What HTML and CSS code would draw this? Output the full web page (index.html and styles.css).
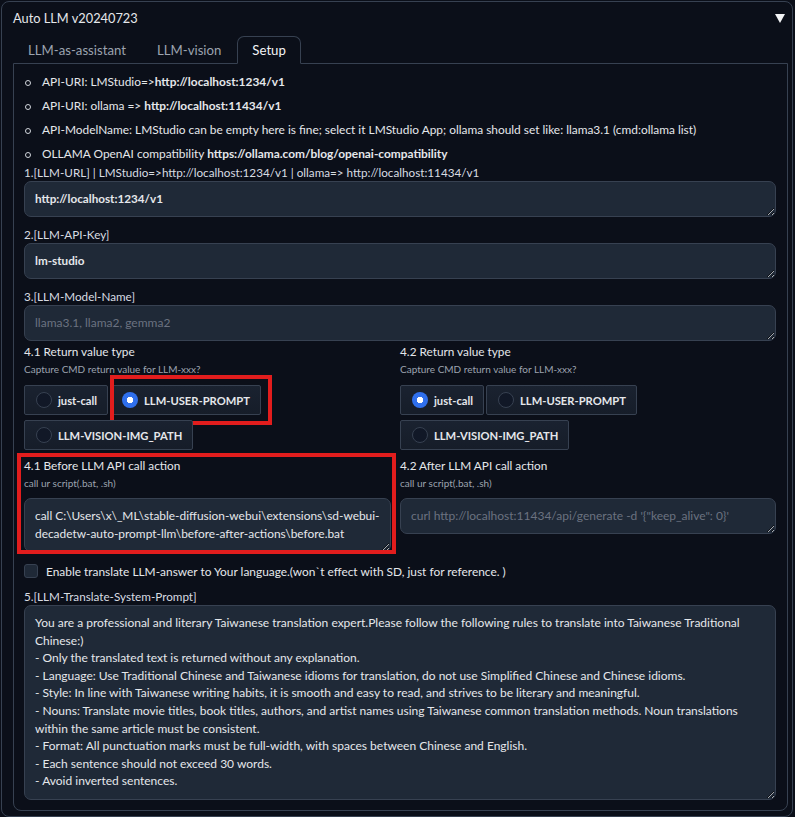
FILE: index.html
```html
<!DOCTYPE html>
<html lang="en">
<head>
<meta charset="utf-8">
<title>Auto LLM</title>
<link rel="stylesheet" href="styles.css">
</head>
<body>
<div class="panel">
  <div class="head">
    <span class="title">Auto LLM v20240723</span>
    <svg class="caret" width="10" height="9" viewBox="0 0 10 9"><polygon points="0,0 10,0 5,9" fill="#f3f4f6"/></svg>
  </div>
  <div class="tabs">
    <button class="tab">LLM-as-assistant</button>
    <button class="tab">LLM-vision</button>
    <button class="tab active">Setup</button>
  </div>
  <div class="tabpanel">
    <ul class="notes">
      <li>API-URI: LMStudio=&gt;<b>http://localhost:1234/v1</b></li>
      <li>API-URI: ollama =&gt; <b>http://localhost:11434/v1</b></li>
      <li>API-ModelName: LMStudio can be empty here is fine; select it LMStudio App; ollama should set like: llama3.1 (cmd:ollama list)</li>
      <li>OLLAMA OpenAI compatibility <b>https://ollama.com/blog/openai-compatibility</b></li>
    </ul>
    <div class="field">
      <label class="lbl">1.[LLM-URL] | LMStudio=&gt;http://localhost:1234/v1 | ollama=&gt; http://localhost:11434/v1</label>
      <textarea class="box strong" rows="1">http://localhost:1234/v1</textarea>
    </div>
    <div class="field">
      <label class="lbl">2.[LLM-API-Key]</label>
      <textarea class="box strong" rows="1">lm-studio</textarea>
    </div>
    <div class="field">
      <label class="lbl">3.[LLM-Model-Name]</label>
      <textarea class="box" rows="1" placeholder="llama3.1, llama2, gemma2"></textarea>
    </div>
    <div class="cols">
      <div class="col">
        <div class="sub">4.1 Return value type</div>
        <div class="info">Capture CMD return value for LLM-xxx?</div>
        <div class="radios">
          <label class="radio"><span class="dot"></span>just-call</label>
          <label class="radio"><span class="dot on"></span>LLM-USER-PROMPT<span class="mark"></span></label>
          <label class="radio"><span class="dot"></span>LLM-VISION-IMG_PATH</label>
        </div>
        <div class="action">
          <div class="sub">4.1 Before LLM API call action</div>
          <div class="info">call ur script(.bat, .sh)</div>
          <textarea class="box two" rows="2">call C:\Users\x\_ML\stable-diffusion-webui\extensions\sd-webui-
decadetw-auto-prompt-llm\before-after-actions\before.bat</textarea>
          <span class="mark2"></span>
        </div>
      </div>
      <div class="col">
        <div class="sub">4.2 Return value type</div>
        <div class="info">Capture CMD return value for LLM-xxx?</div>
        <div class="radios">
          <label class="radio"><span class="dot on"></span>just-call</label>
          <label class="radio"><span class="dot"></span>LLM-USER-PROMPT</label>
          <label class="radio"><span class="dot"></span>LLM-VISION-IMG_PATH</label>
        </div>
        <div class="action">
          <div class="sub">4.2 After LLM API call action</div>
          <div class="info">call ur script(.bat, .sh)</div>
          <textarea class="box" rows="1" placeholder="curl http://localhost:11434/api/generate -d '{&quot;keep_alive&quot;: 0}'"></textarea>
        </div>
      </div>
    </div>
    <label class="check"><span class="cb"></span>Enable translate LLM-answer to Your language.(won`t effect with SD, just for reference. )</label>
    <div class="field last">
      <label class="lbl">5.[LLM-Translate-System-Prompt]</label>
      <textarea class="box big" rows="10">You are a professional and literary Taiwanese translation expert.Please follow the following rules to translate into Taiwanese Traditional
Chinese:)
- Only the translated text is returned without any explanation.
- Language: Use Traditional Chinese and Taiwanese idioms for translation, do not use Simplified Chinese and Chinese idioms.
- Style: In line with Taiwanese writing habits, it is smooth and easy to read, and strives to be literary and meaningful.
- Nouns: Translate movie titles, book titles, authors, and artist names using Taiwanese common translation methods. Noun translations
within the same article must be consistent.
- Format: All punctuation marks must be full-width, with spaces between Chinese and English.
- Each sentence should not exceed 30 words.
- Avoid inverted sentences.</textarea>
    </div>
  </div>
</div>
</body>
</html>
```
FILE: styles.css
```css
* { box-sizing: border-box; }
html, body { margin: 0; padding: 0; background: #0b0f19; }
body {
  font-family: Lato, "Noto Sans", sans-serif;
  color: #e5e7eb;
  font-size: 12px;
  width: 795px;
  height: 817px;
  overflow: hidden;
}
.panel {
  margin: 1px 0 0 1px;
  width: 792px;
  height: 816px;
  border: 1px solid #374151;
  border-radius: 8px;
  padding: 6px 5px 0 11px;
  background: #0b0f19;
}
.head {
  display: flex;
  justify-content: space-between;
  align-items: center;
  height: 20px;
  padding-right: 2px;
}
.title { font-size: 12.8px; color: #e5e7eb; }
.caret { margin-top: 1px; }
.tabs {
  display: flex;
  gap: 1px;
  margin-top: 8px;
  height: 28px;
  position: relative;
  z-index: 1;
}
.tab {
  font-family: inherit;
  font-size: 13.2px;
  color: #9ca3af;
  background: transparent;
  border: 1px solid transparent;
  border-radius: 7px 7px 0 0;
  padding: 0 14px;
  height: 28px;
  margin-bottom: -1px;
}
.tab.active {
  color: #f3f4f6;
  border-color: #374151;
  border-bottom-color: #0b0f19;
  background: #0b0f19;
}
.tabpanel {
  border: 1px solid #374151;
  border-radius: 0 0 8px 8px;
  width: 775px;
  height: 748px;
  margin-top: -1px;
  padding: 10px 11px 9px 10px;
}
.notes { list-style: none; margin: 0 0 2px 0; padding: 0; }
.notes li {
  position: relative;
  padding-left: 18px;
  line-height: 16px;
  margin-bottom: 8px;
  font-size: 11.9px;
  color: #e5e7eb;
}
.notes li:last-child { margin-bottom: 0; }
.notes li::before {
  content: "";
  position: absolute;
  left: 1px;
  top: 6px;
  width: 4px;
  height: 4px;
  border: 1px solid #d1d5db;
  border-radius: 50%;
}
.notes b { font-weight: 700; }
.field { display: flex; flex-direction: column; margin-bottom: 9px; }
.field.last { margin-bottom: 0; }
.lbl {
  line-height: 16px;
  margin-bottom: 1px;
  font-size: 11.7px;
  color: #d8dce2;
}
.box {
  display: block;
  width: 100%;
  font-family: inherit;
  font-size: 12px;
  line-height: 17.6px;
  color: #e5e7eb;
  background: #1f2937;
  border: 1px solid #374151;
  border-radius: 7px;
  padding: 8px 10px;
  height: 36px;
  resize: vertical;
  white-space: pre;
  overflow: hidden;
  outline: none;
}
.box.strong { font-weight: 700; font-size: 11.7px; }
.box.two { height: 54px; font-size: 11.9px; }
.box.big { height: 195px; }
.box::placeholder { color: #6b7280; opacity: 1; }
.cols {
  display: grid;
  grid-template-columns: 367px 1fr;
  column-gap: 9px;
  margin-top: -6px;
}
.col { display: flex; flex-direction: column; }
.sub { font-size: 11.8px; line-height: 16px; color: #e5e7eb; }
.info { font-size: 10px; line-height: 14px; color: #9ca3af; margin-top: 2px; }
.radios {
  display: flex;
  flex-wrap: wrap;
  column-gap: 2px;
  row-gap: 5px;
  margin-top: 9px;
  width: 250px;
}
.radio {
  position: relative;
  display: flex;
  align-items: center;
  height: 30px;
  padding: 0 10px 0 11px;
  gap: 6px;
  border: 1px solid #374151;
  border-radius: 2px;
  background: linear-gradient(#1a2230, #161d29);
  font-weight: 700;
  font-size: 11.2px;
  color: #e5e7eb;
}
.dot {
  width: 16px;
  height: 16px;
  border-radius: 50%;
  border: 1px solid #374151;
  background: #111827;
  flex: none;
}
.dot.on {
  border: none;
  background: radial-gradient(circle, #ffffff 0 3px, #2f6fec 3.5px);
}
.mark {
  position: absolute;
  left: -1px;
  top: -11px;
  right: -12px;
  bottom: -11px;
  border: 4px solid #e21d1d;
  pointer-events: none;
}
.action { position: relative; margin-top: 8px; }
.action .info { margin-bottom: 8px; }
.mark2 {
  position: absolute;
  left: -7px;
  top: -5px;
  right: -5px;
  bottom: -2px;
  border: 4px solid #e21d1d;
  pointer-events: none;
}
.check {
  display: flex;
  align-items: center;
  gap: 8px;
  margin-top: 12px;
  height: 14px;
  font-size: 11.9px;
  color: #e5e7eb;
}
.cb {
  width: 14px;
  height: 14px;
  border: 1px solid #374151;
  border-radius: 3px;
  background: #1f2937;
  flex: none;
}
.check + .field { margin-top: 10px; }
```
